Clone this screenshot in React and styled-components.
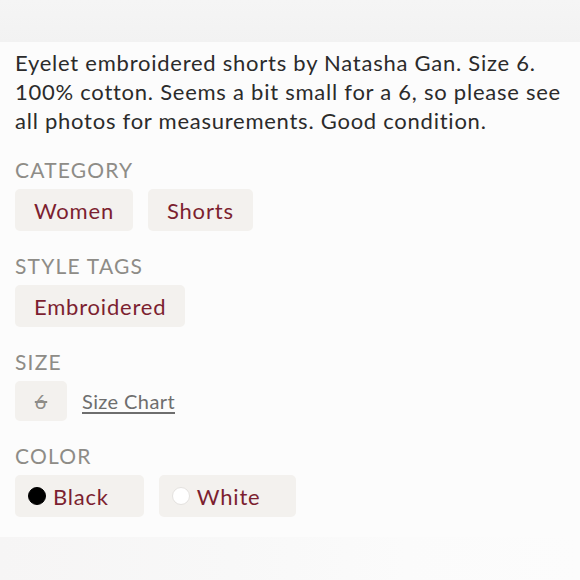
import React from "react";
import styled, { createGlobalStyle } from "styled-components";

const GlobalStyle = createGlobalStyle`
  html, body {
    margin: 0;
    padding: 0;
    background: #fcfcfc;
  }
  body {
    font-family: Lato, "Noto Sans", sans-serif;
  }
`;

const Page = styled.div`
  width: 580px;
  height: 580px;
  overflow: hidden;
  display: flex;
  flex-direction: column;
  background: #fcfcfc;
`;

const TopBand = styled.div`
  height: 42px;
  flex-shrink: 0;
  background: linear-gradient(180deg, #f5f5f5 0%, #f2f2f2 100%);
`;

const Content = styled.div`
  padding: 6px 15px 0;
  display: flex;
  flex-direction: column;
  gap: 23px;
`;

const Description = styled.p`
  margin: 0;
  font-size: 22px;
  line-height: 29px;
  color: #2b2b2b;
  letter-spacing: 0.75px;
`;

const Section = styled.div`
  display: flex;
  flex-direction: column;
  gap: 7px;
`;

const Label = styled.div`
  font-size: 21px;
  line-height: 24px;
  color: #8e8c87;
  text-transform: uppercase;
  letter-spacing: 1.2px;
`;

const ChipRow = styled.div`
  display: flex;
  align-items: center;
  gap: 15px;
`;

const Chip = styled.div`
  display: flex;
  align-items: center;
  gap: 7px;
  height: ${(p) => (p.$small ? 40 : 42)}px;
  min-width: ${(p) => (p.$small ? "52px" : "auto")};
  justify-content: ${(p) => (p.$small ? "center" : "flex-start")};
  box-sizing: border-box;
  padding: 0 ${(p) => (p.$small ? 0 : p.$dot ? 35 : 19)}px 0
    ${(p) => (p.$small ? 0 : p.$dot ? 13 : 19)}px;
  background: #f3f1ee;
  border-radius: 5px;
  font-size: 22px;
  letter-spacing: 0.8px;
  color: #7c1f30;
`;

const Dot = styled.span`
  width: 18px;
  height: 18px;
  border-radius: 50%;
  background: ${(p) => p.$color};
  border: 1px solid ${(p) => (p.$color === "#fff" ? "#e4e2df" : p.$color)};
  box-sizing: border-box;
  flex-shrink: 0;
`;

const SizeValue = styled.span`
  color: #8e8c87;
  font-size: 20px;
  text-decoration: line-through;
`;

const SizeLink = styled.a`
  font-size: 20px;
  letter-spacing: 0.4px;
  color: #6e6e6e;
  text-decoration: underline;
  text-underline-offset: 3px;
`;

const BottomBand = styled.div`
  margin-top: auto;
  height: 43px;
  background: linear-gradient(90deg, #f6f5f5 0%, #f8f8f8 40%, #fbfbfb 70%, #fcfcfc 100%);
`;

const sections = [
  { label: "Category", chips: ["Women", "Shorts"] },
  { label: "Style Tags", chips: ["Embroidered"] },
];

const colors = [
  { name: "Black", color: "#000" },
  { name: "White", color: "#fff" },
];

export default function App() {
  return (
    <Page>
      <GlobalStyle />
      <TopBand />
      <Content>
        <Description>
          Eyelet embroidered shorts by Natasha Gan. Size 6. 100% cotton. Seems a
          bit small for a 6, so please see all photos for measurements. Good
          condition.
        </Description>
        {sections.map((s) => (
          <Section key={s.label}>
            <Label>{s.label}</Label>
            <ChipRow>
              {s.chips.map((c) => (
                <Chip key={c}>{c}</Chip>
              ))}
            </ChipRow>
          </Section>
        ))}
        <Section>
          <Label>Size</Label>
          <ChipRow>
            <Chip $small>
              <SizeValue>6</SizeValue>
            </Chip>
            <SizeLink>Size Chart</SizeLink>
          </ChipRow>
        </Section>
        <Section>
          <Label>Color</Label>
          <ChipRow>
            {colors.map((c) => (
              <Chip key={c.name} $dot>
                <Dot $color={c.color} />
                {c.name}
              </Chip>
            ))}
          </ChipRow>
        </Section>
      </Content>
      <BottomBand />
    </Page>
  );
}
